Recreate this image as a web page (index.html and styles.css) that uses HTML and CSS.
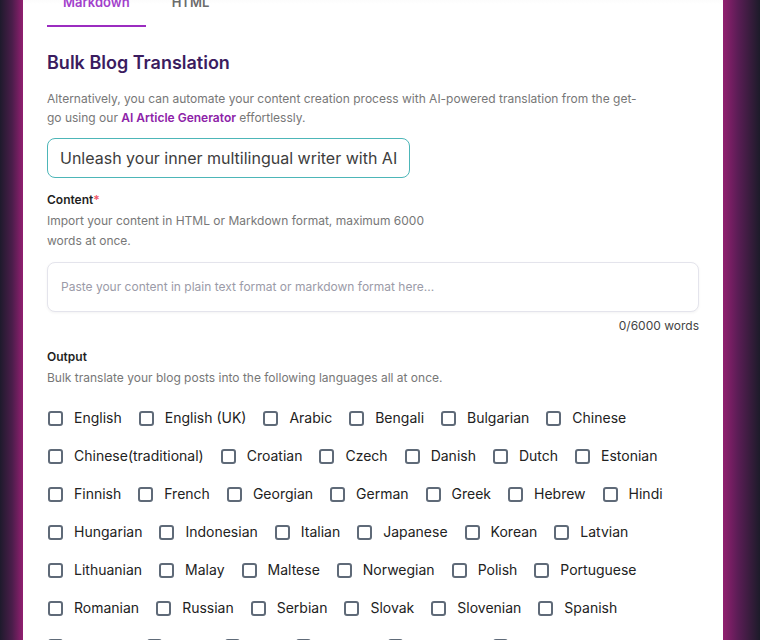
FILE: index.html
```html
<!DOCTYPE html>
<html lang="en">
<head>
  <meta charset="UTF-8">
  <title>Bulk Blog Translation</title>
  <link rel="stylesheet" href="styles.css">
</head>
<body>
  <div class="card">
    <div class="tabs">
      <div class="tab active">Markdown</div>
      <div class="tab">HTML</div>
    </div>

    <h2 class="title">Bulk Blog Translation</h2>
    <p class="intro">Alternatively, you can automate your content creation process with AI-powered translation from the get-go using our <a href="#">AI Article Generator</a> effortlessly.</p>

    <input type="text" class="topic" value="Unleash your inner multilingual writer with AI">

    <div class="label">Content<span class="req">*</span></div>
    <p class="hint narrow">Import your content in HTML or Markdown format, maximum 6000 words at once.</p>
    <textarea class="content" placeholder="Paste your content in plain text format or markdown format here..."></textarea>
    <div class="count">0/6000 words</div>

    <div class="label out">Output</div>
    <p class="hint">Bulk translate your blog posts into the following languages all at once.</p>

    <div class="langs">
      <label><input type="checkbox">English</label>
      <label><input type="checkbox">English (UK)</label>
      <label><input type="checkbox">Arabic</label>
      <label><input type="checkbox">Bengali</label>
      <label><input type="checkbox">Bulgarian</label>
      <label><input type="checkbox">Chinese</label>
      <label><input type="checkbox">Chinese(traditional)</label>
      <label><input type="checkbox">Croatian</label>
      <label><input type="checkbox">Czech</label>
      <label><input type="checkbox">Danish</label>
      <label><input type="checkbox">Dutch</label>
      <label><input type="checkbox">Estonian</label>
      <label><input type="checkbox">Finnish</label>
      <label><input type="checkbox">French</label>
      <label><input type="checkbox">Georgian</label>
      <label><input type="checkbox">German</label>
      <label><input type="checkbox">Greek</label>
      <label><input type="checkbox">Hebrew</label>
      <label><input type="checkbox">Hindi</label>
      <label><input type="checkbox">Hungarian</label>
      <label><input type="checkbox">Indonesian</label>
      <label><input type="checkbox">Italian</label>
      <label><input type="checkbox">Japanese</label>
      <label><input type="checkbox">Korean</label>
      <label><input type="checkbox">Latvian</label>
      <label><input type="checkbox">Lithuanian</label>
      <label><input type="checkbox">Malay</label>
      <label><input type="checkbox">Maltese</label>
      <label><input type="checkbox">Norwegian</label>
      <label><input type="checkbox">Polish</label>
      <label><input type="checkbox">Portuguese</label>
      <label><input type="checkbox">Romanian</label>
      <label><input type="checkbox">Russian</label>
      <label><input type="checkbox">Serbian</label>
      <label><input type="checkbox">Slovak</label>
      <label><input type="checkbox">Slovenian</label>
      <label><input type="checkbox">Spanish</label>
      <label><input type="checkbox">Swedish</label>
      <label><input type="checkbox">Tamil</label>
      <label><input type="checkbox">Thai</label>
      <label><input type="checkbox">Turkish</label>
      <label><input type="checkbox">Ukrainian</label>
      <label><input type="checkbox">Vietnamese</label>
    </div>
  </div>
</body>
</html>
```

FILE: styles.css
```css
html, body { margin: 0; height: 100%; overflow: hidden; }
body {
  font-family: Inter, "Liberation Sans", sans-serif;
  background: linear-gradient(90deg, #1e1a2c 0px, #4a1d4a 12px, #921f70 23px, #921f70 723px, #5a1d55 738px, #1c1b29 760px);
}

.card {
  margin-left: 23px;
  width: 700px;
  min-height: 100%;
  box-sizing: border-box;
  padding: 0 24px 40px;
  background: linear-gradient(#e6e6e6 0px, #f6f6f6 12px, #fff 24px);
}

.tabs { display: flex; margin-top: -20px; }
.tab {
  padding: 12px 16px 13px;
  line-height: 20px;
  font-size: 13px;
  font-weight: 600;
  color: #6b6b6b;
  border-bottom: 2px solid transparent;
}
.tab.active { color: #a23fcb; border-bottom-color: #9b2cc0; }
.tab + .tab { margin-left: 10px; }

.title { margin: 24px 0 0; font-size: 18px; line-height: 24px; font-weight: 600; color: #3b1c5f; }
.intro { margin: 14px 0 0; max-width: 596px; font-size: 12px; line-height: 19px; color: #777; }
.intro a { color: #8d22a8; font-weight: 600; text-decoration: none; }

.topic {
  display: block;
  margin-top: 11px;
  width: 363px;
  height: 40px;
  box-sizing: border-box;
  padding: 0 12px;
  border: 1px solid #4db6b8;
  border-radius: 8px;
  font-family: inherit;
  font-size: 16px;
  color: #3d3d3d;
  outline: none;
}

.label { margin-top: 11px; font-size: 12px; line-height: 22px; font-weight: 600; color: #1f1f1f; }
.req { color: #f0576a; }
.hint { margin: 0; font-size: 12px; line-height: 20px; color: #777; }
.hint.narrow { max-width: 400px; }

.content {
  display: block;
  margin-top: 11px;
  width: 100%;
  height: 50px;
  box-sizing: border-box;
  padding: 14px 13px;
  border: 1px solid #e4e4ec;
  border-radius: 8px;
  box-shadow: 0 1px 3px rgba(0, 0, 0, 0.05);
  font-family: inherit;
  font-size: 12px;
  line-height: 20px;
  resize: none;
  outline: none;
}
.content::placeholder { color: #9b9ba8; }

.count { margin-top: 5px; text-align: right; font-size: 12px; line-height: 18px; color: #444; }

.langs { display: flex; flex-wrap: wrap; row-gap: 16px; column-gap: 16px; margin-top: 19px; }
.langs label { display: flex; align-items: center; gap: 11px; font-size: 14px; line-height: 22px; color: #222; }
.langs input {
  appearance: none;
  margin: 0 0 0 1px;
  width: 15px;
  height: 15px;
  border: 2px solid #5f6a78;
  border-radius: 3px;
  background: #fff;
}
```
